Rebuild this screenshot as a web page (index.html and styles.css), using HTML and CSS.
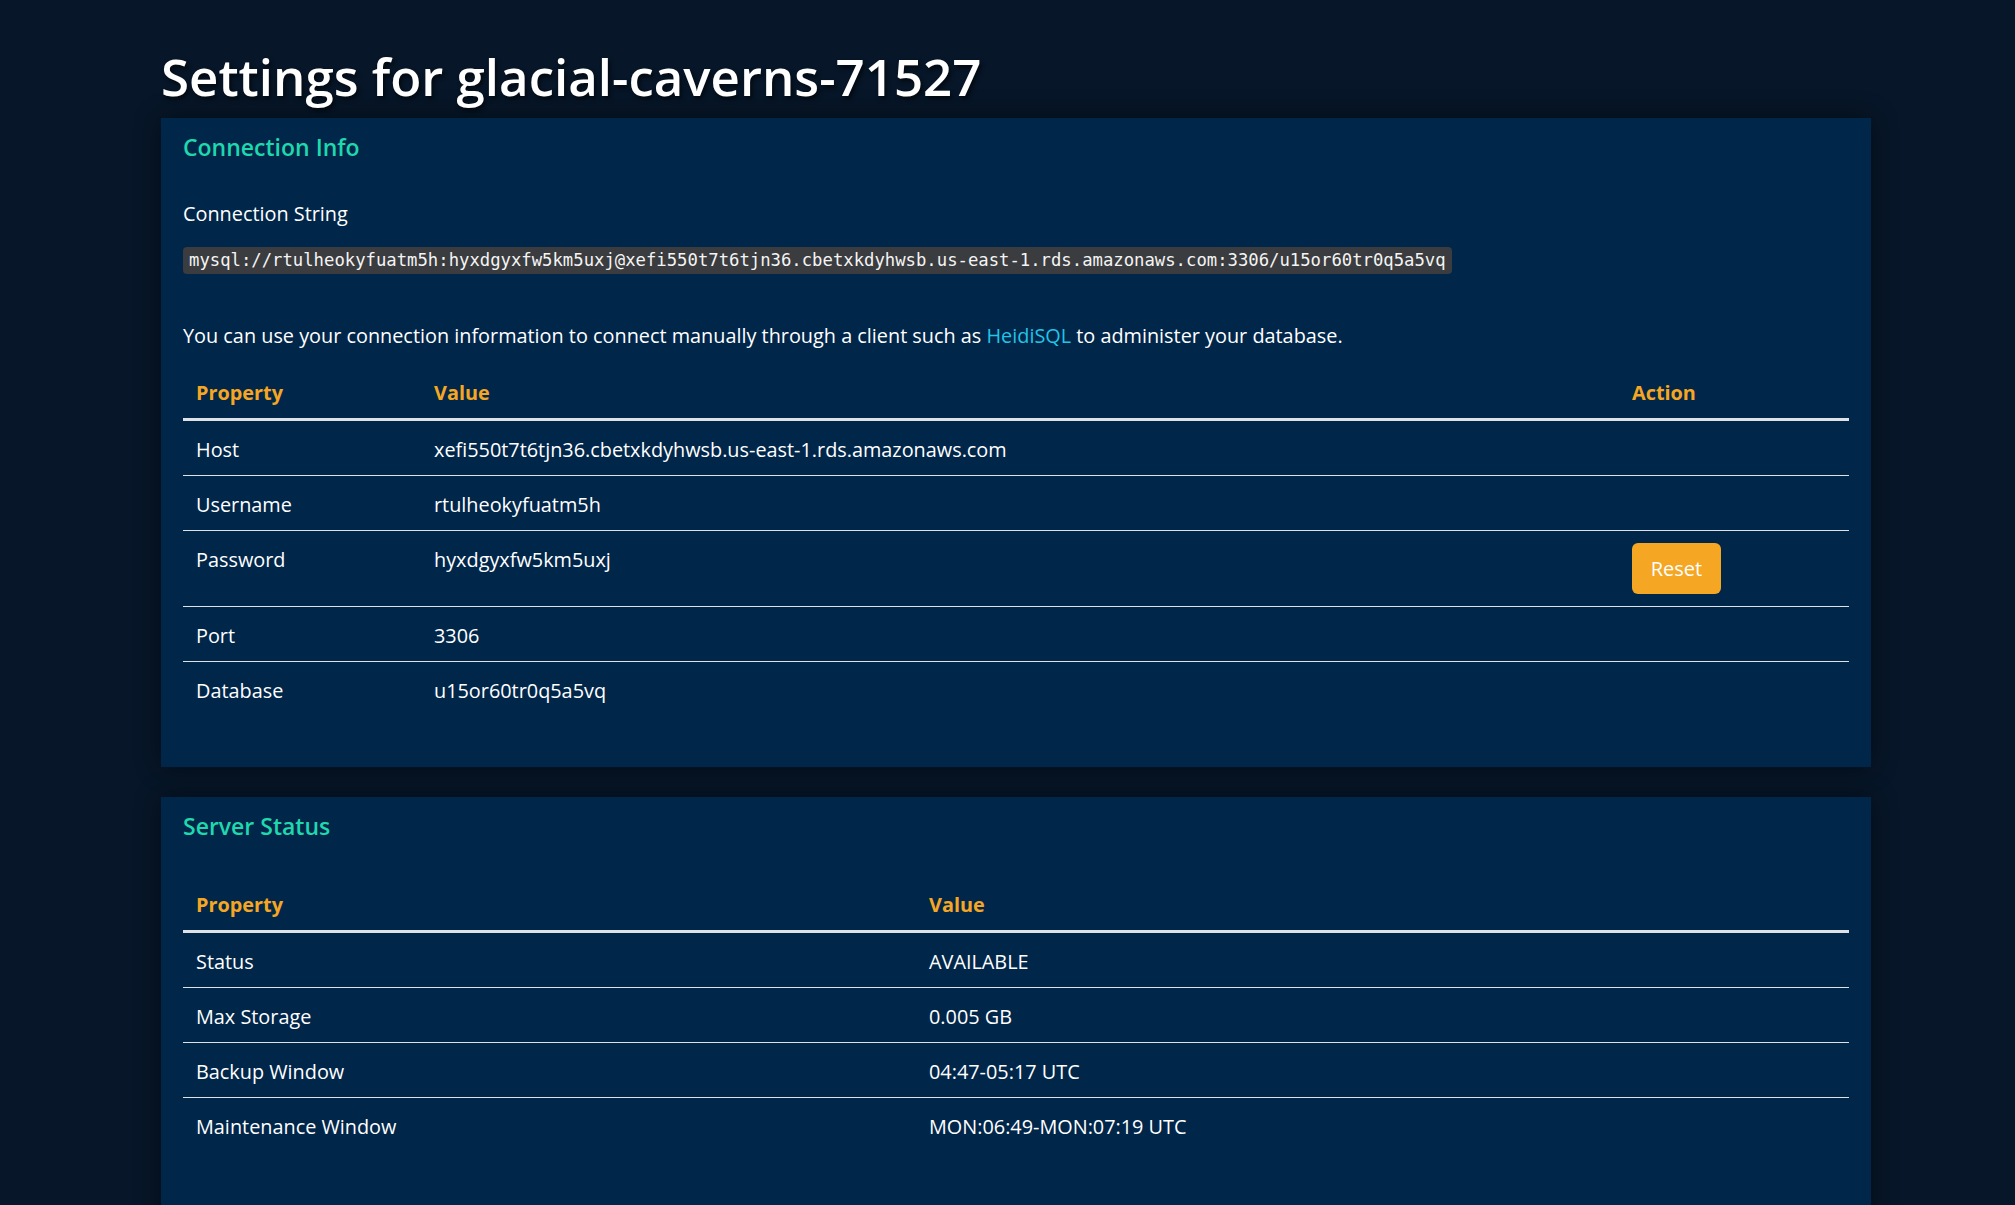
FILE: index.html
```html
<!DOCTYPE html>
<html lang="en">
<head>
<meta charset="utf-8">
<title>Settings for glacial-caverns-71527</title>
<link rel="stylesheet" href="styles.css">
</head>
<body>
<main class="page">
  <h1 class="title">Settings for glacial-caverns-71527</h1>

  <section class="panel panel-first">
    <h2 class="panel-heading">Connection Info</h2>
    <p class="label">Connection String</p>
    <code class="conn-string">mysql://rtulheokyfuatm5h:hyxdgyxfw5km5uxj@xefi550t7t6tjn36.cbetxkdyhwsb.us-east-1.rds.amazonaws.com:3306/u15or60tr0q5a5vq</code>
    <p class="note">You can use your connection information to connect manually through a client such as <a class="link" href="#">HeidiSQL</a> to administer your database.</p>
    <table class="props props-conn">
      <thead>
        <tr><th class="col-prop">Property</th><th class="col-val">Value</th><th class="col-act">Action</th></tr>
      </thead>
      <tbody>
        <tr><td>Host</td><td>xefi550t7t6tjn36.cbetxkdyhwsb.us-east-1.rds.amazonaws.com</td><td></td></tr>
        <tr><td>Username</td><td>rtulheokyfuatm5h</td><td></td></tr>
        <tr><td>Password</td><td>hyxdgyxfw5km5uxj</td><td class="cell-action"><button class="btn-reset" type="button">Reset</button></td></tr>
        <tr><td>Port</td><td>3306</td><td></td></tr>
        <tr><td>Database</td><td>u15or60tr0q5a5vq</td><td></td></tr>
      </tbody>
    </table>
  </section>

  <section class="panel panel-second">
    <h2 class="panel-heading">Server Status</h2>
    <table class="props props-status">
      <thead>
        <tr><th class="col-prop2">Property</th><th>Value</th></tr>
      </thead>
      <tbody>
        <tr><td>Status</td><td>AVAILABLE</td></tr>
        <tr><td>Max Storage</td><td>0.005 GB</td></tr>
        <tr><td>Backup Window</td><td>04:47-05:17 UTC</td></tr>
        <tr><td>Maintenance Window</td><td>MON:06:49-MON:07:19 UTC</td></tr>
      </tbody>
    </table>
  </section>
</main>
</body>
</html>
```

FILE: styles.css
```css
* { box-sizing: border-box; }

html, body {
  margin: 0;
  padding: 0;
}

body {
  background: #071628;
  color: #ffffff;
  font-family: "Open Sans", "Noto Sans", "Liberation Sans", sans-serif;
  font-size: 19.85px;
  line-height: 30px;
  min-height: 1205px;
}

.page {
  width: 1710px;
  margin-left: 161px;
  padding-top: 46px;
}

.title {
  margin: 0 0 12px 0;
  font-size: 51px;
  line-height: 60px;
  font-weight: 600;
  letter-spacing: 0;
  color: #ffffff;
  text-shadow: 2px 3px 4px rgba(0, 0, 0, 0.6);
}

.panel {
  background: #00264a;
  padding: 15px 22px 35px 22px;
  box-shadow: 0 0 24px rgba(0, 0, 0, 0.45);
}

.panel-second {
  margin-top: 30px;
  padding-bottom: 60px;
}

.panel-heading {
  margin: 0;
  font-size: 23px;
  line-height: 28px;
  font-weight: 600;
  color: #1fd8ae;
}

.label {
  margin: 38px 0 0 0;
}

.conn-string {
  display: block;
  width: fit-content;
  margin-top: 18px;
  padding: 0 6px;
  background: #3a3c3f;
  border-radius: 4px;
  font-family: "DejaVu Sans Mono", "Liberation Mono", monospace;
  font-size: 17.25px;
  line-height: 27px;
  color: #f4f4f4;
}

.note {
  margin: 47px 0 0 0;
}

.link {
  color: #22c4e6;
  text-decoration: none;
}

.props {
  width: 100%;
  border-collapse: separate;
  border-spacing: 0;
  margin: 13px 0 16px 0;
}

.props-status {
  margin-top: 36px;
}

.props th {
  text-align: left;
  vertical-align: bottom;
  font-weight: 700;
  color: #f5a623;
  padding: 14px 13px 10px 13px;
  border-bottom: 2px solid #dee2e6;
}

.props td {
  vertical-align: top;
  padding: 14px 13px 10px 13px;
  border-top: 1px solid #dee2e6;
  color: #ffffff;
}

.props td.cell-action {
  padding: 12px 13px 12px 13px;
}

.col-prop { width: 238px; }
.col-act { width: 230px; }
.col-prop2 { width: 733px; }

.btn-reset {
  display: block;
  width: 89px;
  height: 51px;
  padding: 0;
  border: none;
  border-radius: 6px;
  background: #f5a623;
  color: #ffffff;
  font-family: inherit;
  font-size: 20px;
  line-height: 51px;
  cursor: pointer;
}
```
